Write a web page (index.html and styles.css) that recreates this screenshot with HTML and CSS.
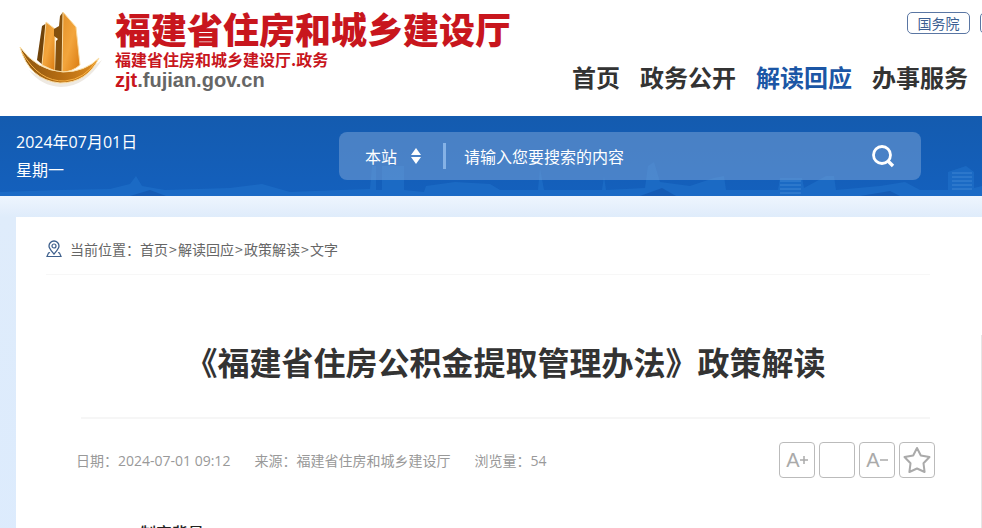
FILE: index.html
```
<!DOCTYPE html>
<html lang="zh-CN">
<head>
    <meta charset="UTF-8">
    <meta name="viewport" content="width=device-width, initial-scale=1.0">
    <title>《福建省住房公积金提取管理办法》政策解读</title>
    <link rel="stylesheet" href="styles.css">
</head>
<body>
    <header class="header">
        <a class="logo" href="#">
            <svg class="logo-icon" viewBox="0 0 84 80" aria-hidden="true">
                <defs>
                    <linearGradient id="gold" x1="0" y1="0" x2="1" y2="1">
                        <stop offset="0" stop-color="#e3922a"/>
                        <stop offset="0.5" stop-color="#f3a53c"/>
                        <stop offset="1" stop-color="#d97a10"/>
                    </linearGradient>
                    <linearGradient id="bowl" x1="0" y1="0" x2="1" y2="0">
                        <stop offset="0" stop-color="#8a5510"/>
                        <stop offset="0.5" stop-color="#b56c12"/>
                        <stop offset="1" stop-color="#e08e22"/>
                    </linearGradient>
                </defs>
                <path d="M10 60 Q40 84 83 50 Q66 77 42 77 Q22 76 10 60Z" fill="#eee9e2"/>
                <path d="M23 16 L18 50 L25 56 L28 13Z" fill="#70430a"/>
                <path d="M27 12 L36 19 L36 61 L23 55Z" fill="url(#gold)" stroke="#fbdca2" stroke-width="1"/>
                <path d="M41 6 L44 2 L46 62 L36 61 L37 31 L39 29 L35 26 L35 19 L40 16Z" fill="#84500d"/>
                <path d="M44 2 L57 17 L61 55 Q53 62 43 62Z" fill="url(#gold)" stroke="#fbdca2" stroke-width="1"/>
                <path d="M1 37 Q17 60 44 62 Q66 62 80 48 Q68 73 41 73 Q10 70 1 37Z" fill="url(#bowl)" stroke="#fbe0a8" stroke-width="1"/>
                <path d="M3 42 Q20 72 46 71 Q66 69 77 51" fill="none" stroke="#f6b044" stroke-width="1"/>
            </svg>
            <span class="logo-text">
                <span class="logo-name">福建省住房和城乡建设厅</span>
                <span class="logo-sub">福建省住房和城乡建设厅.政务</span>
                <span class="logo-url"><em>zjt</em>.fujian.gov.cn</span>
            </span>
        </a>
        <div class="header-right">
            <div class="top-links">
                <a class="top-link" href="#">国务院</a>
                <a class="top-link" href="#" aria-hidden="true"></a>
            </div>
            <nav class="nav">
                <a href="#">首页</a>
                <a href="#">政务公开</a>
                <a class="active" href="#">解读回应</a>
                <a href="#">办事服务</a>
            </nav>
        </div>
    </header>

    <section class="banner">
        <svg class="skyline" viewBox="0 0 982 80" preserveAspectRatio="none" aria-hidden="true">
            <path d="M0 76 L60 74 L110 73 L130 68 L136 60 L142 70 L165 74 L230 72 L262 68 L290 76 L340 74 L370 73 L372 50 L376 50 L376 74 L382 74 L382 50 L404 50 L404 74 L424 76 L426 70 L455 66 L490 68 L500 74 L538 74 L540 52 L544 74 L602 74 L604 60 L606 74 L645 72 L648 50 L654 46 L660 66 L690 70 L714 62 L724 60 L726 74 L778 74 L780 62 L802 62 L804 72 L826 60 L834 60 L836 74 L880 70 L905 66 L920 74 L948 74 L948 56 L966 50 L974 56 L974 72 L982 70 L982 80 L0 80Z" fill="#2477d0" opacity="0.45"/>
            <path d="M130 80 L150 74 L166 80Z M640 80 L662 72 L676 80Z M860 80 L890 75 L900 80Z" fill="#0c479a" opacity="0.4"/>
            <path d="M780 65h21M780 69h21M780 73h21M780 77h21M952 57h20M952 61h20M952 65h20M952 69h20M952 73h20" stroke="#5799df" opacity="0.6"/>
        </svg>
        <div class="date">2024年07月01日<br>星期一</div>
        <form class="search">
            <select class="search-scope" aria-label="搜索范围">
                <option>本站</option>
            </select>
            <svg class="search-arrows" viewBox="0 0 10 16" aria-hidden="true">
                <path d="M5 0 L10 7 H0Z M5 16 L0 9 H10Z" fill="#fff"/>
            </svg>
            <input class="search-input" type="text" placeholder="请输入您要搜索的内容" aria-label="搜索">
            <button class="search-btn" type="button" aria-label="搜索">
                <svg viewBox="0 0 24 24" width="24" height="24">
                    <circle cx="11" cy="11" r="8.5" fill="none" stroke="#fff" stroke-width="2.8"/>
                    <path d="M17 17 L22 22" stroke="#fff" stroke-width="3.4"/>
                </svg>
            </button>
        </form>
    </section>

    <main class="card">
        <div class="crumbs">
            <svg class="pin" viewBox="0 0 16 18" aria-hidden="true">
                <path d="M8 14 C5 10.5 3 8.500 3 6 A5 5 0 0 1 13 6 C13 8.500 11 10.500 8 14Z" fill="none" stroke="#3d5f8c" stroke-width="1.3"/>
                <circle cx="8" cy="6" r="2" fill="none" stroke="#3d5f8c" stroke-width="1.2"/>
                <path d="M4 12.500 L2.500 13 L1 16.500 H15 L13.500 13 L12 12.500" fill="none" stroke="#3d5f8c" stroke-width="1.2"/>
            </svg>
            <span>当前位置：</span>
            <a href="#">首页</a><span class="sep">&gt;</span><a href="#">解读回应</a><span class="sep">&gt;</span><a href="#">政策解读</a><span class="sep">&gt;</span><a href="#">文字</a>
        </div>
        <article class="article">
            <h1>《福建省住房公积金提取管理办法》政策解读</h1>
            <div class="meta">
                <span>日期：2024-07-01 09:12</span>
                <span>来源：福建省住房和城乡建设厅</span>
                <span>浏览量：54</span>
                <div class="tools">
                    <button type="button" aria-label="放大字体">A<svg viewBox="0 0 8 8" width="8" height="8"><path d="M0 4H8M4 0V8" stroke="#aaa" stroke-width="1.5"/></svg></button>
                    <button type="button" aria-label="默认字体"></button>
                    <button type="button" aria-label="缩小字体">A<svg viewBox="0 0 8 8" width="8" height="8"><path d="M0 4H8" stroke="#aaa" stroke-width="1.5"/></svg></button>
                    <button type="button" aria-label="收藏">
                        <svg viewBox="0 0 28 28" width="28" height="28">
                            <path d="M14 2 L17.8 9.5 L26.5 11 L20.5 17.3 L21.6 26 L14 22.5 L6.4 26 L7.5 17.3 L1.5 11 L10.2 9.5Z" fill="none" stroke="#aaa" stroke-width="2" stroke-linejoin="round"/>
                        </svg>
                    </button>
                </div>
            </div>
            <p class="section-title">一、制定背景</p>
        </article>
    </main>
</body>
</html>
```
FILE: styles.css
```
* {
    box-sizing: border-box;
}
html {
    overflow: hidden;
}
body {
    margin: 0;
    font-family: "Noto Sans CJK SC", sans-serif;
    color: #333;
    background: linear-gradient(to bottom, #eef5fe 196px, #dfecfb 217px, #dcebfd 100%);
}
a {
    color: inherit;
    text-decoration: none;
}
.header {
    display: flex;
    justify-content: space-between;
    height: 116px;
    padding: 10px 14px 0 19px;
    background: #fff;
    overflow: hidden;
}
.logo {
    display: flex;
    gap: 12px;
}
.logo-icon {
    width: 84px;
    height: 80px;
}
.logo-text {
    display: flex;
    flex-direction: column;
    white-space: nowrap;
    color: #c8161d;
}
.logo-name {
    font-size: 36px;
    font-weight: 900;
    line-height: 36px;
}
.logo-sub {
    font-size: 16px;
    font-weight: 700;
    line-height: 26px;
}
.logo-url {
    font-family: "Liberation Sans", sans-serif;
    font-size: 20px;
    font-weight: 700;
    line-height: 16px;
    color: #666;
}
.logo-url em {
    font-style: normal;
    color: #c8161d;
}
.header-right {
    display: flex;
    flex-direction: column;
    align-items: flex-end;
    gap: 25px;
}
.top-links {
    display: flex;
    gap: 10px;
    margin: 2px -75px 0 0;
}
.top-link {
    width: 63px;
    height: 22px;
    border: 1px solid #5a76a3;
    border-radius: 5px;
    font-size: 14px;
    line-height: 20px;
    text-align: center;
    color: #3c5f92;
}
.nav {
    display: flex;
    gap: 20px;
    font-size: 24px;
    font-weight: 700;
    line-height: 36px;
    white-space: nowrap;
}
.nav .active {
    color: #1b56a5;
}
.banner {
    position: relative;
    display: flex;
    align-items: center;
    height: 80px;
    padding: 0 61px 0 16px;
    background: linear-gradient(to bottom, #145baf, #1460bd);
    color: #fff;
}
.skyline {
    position: absolute;
    left: 0;
    top: 0;
    width: 100%;
    height: 100%;
}
.date {
    flex: 0 0 323px;
    font-family: "Open Sans", "Noto Sans CJK SC", sans-serif;
    font-size: 16px;
    line-height: 28px;
    z-index: 1;
}
.search {
    display: flex;
    flex: 1;
    align-items: center;
    height: 48px;
    padding: 0 26px;
    border-radius: 8px;
    background: rgba(125, 165, 215, 0.5);
    z-index: 1;
}
.search-scope {
    appearance: none;
    width: 46px;
    padding: 0;
    border: 0;
    background: none;
    font: inherit;
    font-size: 16px;
    color: #fff;
}
.search-arrows {
    width: 10px;
    height: 16px;
}
.search-input {
    flex: 1;
    min-width: 0;
    height: 26px;
    margin-left: 22px;
    padding: 0 0 0 18px;
    border: 0;
    border-left: 3px solid #85b2e6;
    outline: none;
    background: none;
    font: inherit;
    font-size: 16px;
    color: #fff;
}
.search-input::placeholder {
    color: #fff;
    opacity: 1;
}
.search-btn {
    display: flex;
    padding: 0;
    border: 0;
    background: none;
    cursor: pointer;
}
.card {
    margin: 21px 0 0 16px;
    padding: 6px 0 30px 30px;
    background: #fff;
}
.crumbs {
    display: flex;
    align-items: center;
    height: 52px;
    margin-right: 52px;
    border-bottom: 1px solid #f7f7f7;
    font-size: 14px;
    color: #666;
}
.crumbs .sep {
    width: 10px;
    text-align: center;
}
.pin {
    width: 16px;
    height: 18px;
    margin-right: 8px;
}
.article {
    margin-top: 60px;
    padding: 0 46px 0 30px;
    border-right: 1px solid #e6e6e6;
}
.article h1 {
    margin: 0 5px;
    padding-bottom: 30px;
    border-bottom: 2px solid #f6f6f6;
    font-size: 32px;
    font-weight: 700;
    line-height: 52px;
    text-align: center;
    white-space: nowrap;
}
.meta {
    display: flex;
    align-items: center;
    gap: 24px;
    margin-top: 23px;
    font-family: "Open Sans", "Noto Sans CJK SC", sans-serif;
    font-size: 14px;
    color: #999;
}
.tools {
    display: flex;
    gap: 4px;
    margin-left: auto;
}
.tools button {
    display: flex;
    align-items: center;
    justify-content: center;
    width: 36px;
    height: 36px;
    padding: 0;
    border: 1px solid #bbb;
    border-radius: 4px;
    background: #fff;
    font-family: "Liberation Sans", sans-serif;
    font-size: 20px;
    color: #aaa;
    cursor: pointer;
}
.section-title {
    margin: 42px 0 0;
    text-indent: 32px;
    font-size: 16px;
    font-weight: 500;
    line-height: 24px;
    color: #222;
}
```
